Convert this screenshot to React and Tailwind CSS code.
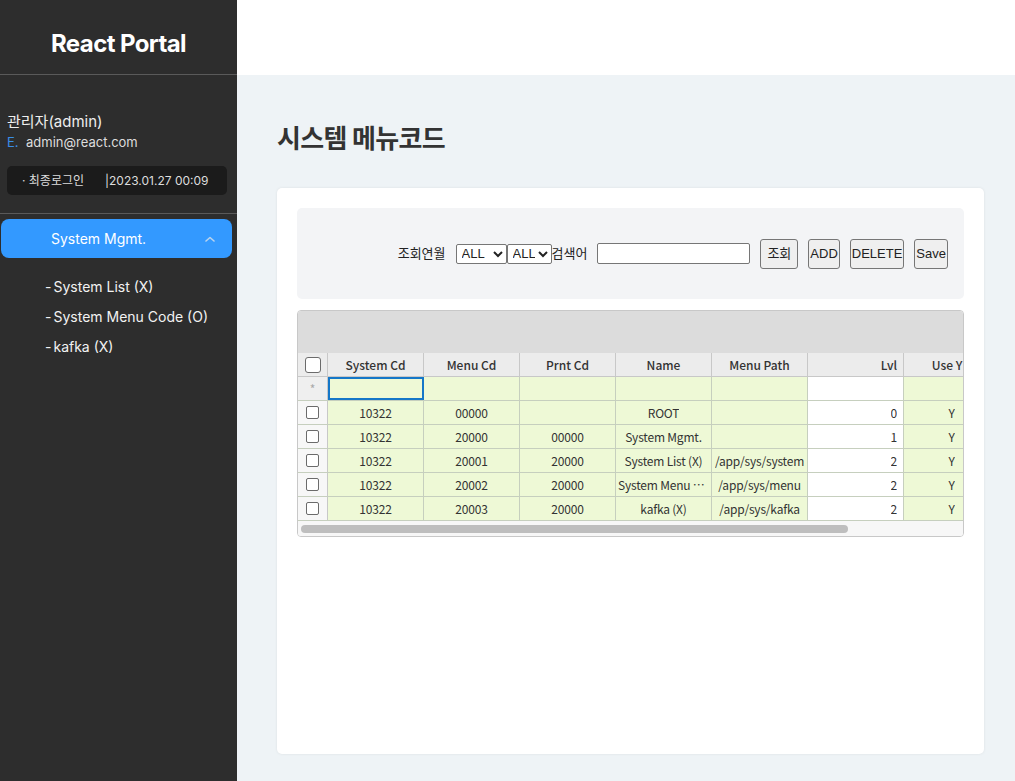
import React from 'react';

const rows = [
  { sys: '10322', menu: '00000', prnt: '', name: 'ROOT', path: '', lvl: '0', use: 'Y' },
  { sys: '10322', menu: '20000', prnt: '00000', name: 'System Mgmt.', path: '', lvl: '1', use: 'Y' },
  { sys: '10322', menu: '20001', prnt: '20000', name: 'System List (X)', path: '/app/sys/system', lvl: '2', use: 'Y' },
  { sys: '10322', menu: '20002', prnt: '20000', name: 'System Menu Code (O)', path: '/app/sys/menu', lvl: '2', use: 'Y' },
  { sys: '10322', menu: '20003', prnt: '20000', name: 'kafka (X)', path: '/app/sys/kafka', lvl: '2', use: 'Y' },
];

const cols = ['System Cd', 'Menu Cd', 'Prnt Cd', 'Name', 'Menu Path', 'Lvl', 'Use YN'];

const Check = ({ big }) => (
  <span className={big ? 'block w-[16px] h-[16px] rounded-[3px] border border-[#6b6b6b] bg-white' : 'block w-[13px] h-[13px] rounded-[2px] border border-[#6b6b6b] bg-white'} />
);

const Cell = ({ children, white, right, selected }) => (
  <div
    className={`w-[96px] shrink-0 h-full border-r border-[#c6cfbe] flex items-center overflow-hidden whitespace-nowrap ${right ? 'justify-end pr-[6px]' : 'justify-center px-[2px]'} ${white ? 'bg-white' : 'bg-[#eef9d6]'} ${selected ? 'outline-2 outline-[#1577c8] -outline-offset-2' : ''}`}
  >
    <span className="truncate tracking-[-0.2px]">{children}</span>
  </div>
);

const Sidebar = () => (
  <aside className="w-[237px] shrink-0 bg-[#2d2d2d] text-white h-[781px]" style={{ fontFamily: 'Inter, "Noto Sans CJK KR", sans-serif' }}>
    <div className="h-[75px] flex items-center justify-center pt-[13px] border-b border-[#5a5a5a]">
      <span className="text-[24px] font-bold tracking-tight">React Portal</span>
    </div>
    <div className="pt-[37px] pl-[7px] pr-[10px]">
      <div className="text-[15px] leading-[20px] text-[#eee]">관리자(admin)</div>
      <div className="text-[13px] leading-[18px] mt-[1px] flex">
        <span className="text-[#3a8ee6] w-[19px]">E.</span>
        <span className="text-[#ddd]">admin@react.com</span>
      </div>
      <div className="mt-[15px] h-[29px] rounded-[5px] bg-[#1b1b1b] flex items-center text-[12px] text-[#ddd]">
        <span className="pl-[15px] w-[98px]">· 최종로그인</span>
        <span>|2023.01.27 00:09</span>
      </div>
    </div>
    <div className="mt-[18px] border-t border-[#5a5a5a]" />
    <div className="pl-[1px] pr-[5px] pt-[5px]">
      <div className="h-[39px] rounded-[8px] bg-[#3399ff] flex items-center justify-between pl-[50px] pr-[17px]">
        <span className="text-[14px]">System Mgmt.</span>
        <svg width="10" height="6" viewBox="0 0 10 6" fill="none">
          <path d="M1 5L5 1.5L9 5" stroke="#b9d3ee" strokeWidth="1.6" strokeLinecap="round" strokeLinejoin="round" />
        </svg>
      </div>
    </div>
    <ul className="pl-[45px] pt-[19px] text-[14px] text-[#f2f2f2] flex flex-col gap-[10px]">
      {['System List (X)', 'System Menu Code (O)', 'kafka (X)'].map((m) => (
        <li key={m} className="leading-[20px]"><span className="mr-[2px]">-</span>{m}</li>
      ))}
    </ul>
  </aside>
);

const SearchBar = () => (
  <div className="h-[91px] rounded-[5px] bg-[#f3f4f6] flex items-center justify-end pr-[16px] text-[13px] text-[#222]" style={{ fontFamily: '"Liberation Sans", "Noto Sans CJK KR", sans-serif' }}>
    <span className="mr-[10px]">조회연월</span>
    <select className="h-[20px] w-[51px] border border-[#767676] rounded-[2px] bg-white text-[13px] pl-[1px]">
      <option>ALL</option>
    </select>
    <select className="h-[20px] w-[45px] border border-[#767676] rounded-[2px] bg-white text-[13px] pl-[1px]">
      <option>ALL</option>
    </select>
    <span className="mr-[10px]">검색어</span>
    <input className="h-[21px] w-[153px] border border-[#767676] rounded-[2px] bg-white mr-[10px]" />
    <button className="h-[30px] px-[6px] border border-[#767676] rounded-[3px] bg-[#efefef] mr-[10px]">조회</button>
    <button className="h-[30px] px-[1px] border border-[#767676] rounded-[3px] bg-[#efefef] mr-[10px]">ADD</button>
    <button className="h-[30px] px-[1px] border border-[#767676] rounded-[3px] bg-[#efefef] mr-[10px]">DELETE</button>
    <button className="h-[30px] px-[1px] border border-[#767676] rounded-[3px] bg-[#efefef]">Save</button>
  </div>
);

const Grid = () => (
  <div className="mt-[11px] w-full min-w-0 border border-[#c8c8c8] rounded-[4px] overflow-hidden text-[12px] text-[#333]" style={{ fontFamily: '"Noto Sans CJK KR", "Noto Sans", sans-serif' }}>
    <div className="h-[42px] bg-[#dcdcdc]" />
    <div className="flex h-[24px] bg-[#ececec] border-b border-[#c8c8c8] font-medium text-[#333]">
      <div className="w-[30px] shrink-0 border-r border-[#c8c8c8] flex items-center justify-center"><Check big /></div>
      {cols.map((c) => (
        <div key={c} className={`w-[96px] shrink-0 border-r border-[#c8c8c8] flex items-center whitespace-nowrap overflow-hidden ${c === 'Lvl' ? 'justify-end pr-[6px]' : 'justify-center'}`}>{c}</div>
      ))}
    </div>
    <div className="flex h-[24px] border-b border-[#c6cfbe]">
      <div className="w-[30px] shrink-0 border-r border-[#c8c8c8] bg-[#efefef] flex items-center justify-center text-[#aaa]">*</div>
      <Cell selected />
      <Cell />
      <Cell />
      <Cell />
      <Cell />
      <Cell white right />
      <Cell />
    </div>
    {rows.map((r) => (
      <div key={r.menu} className="flex h-[24px] border-b border-[#c6cfbe]">
        <div className="w-[30px] shrink-0 border-r border-[#c8c8c8] bg-[#f7f7f7] flex items-center justify-center"><Check /></div>
        <Cell>{r.sys}</Cell>
        <Cell>{r.menu}</Cell>
        <Cell>{r.prnt}</Cell>
        <Cell>{r.name}</Cell>
        <Cell>{r.path}</Cell>
        <Cell white right>{r.lvl}</Cell>
        <Cell>{r.use}</Cell>
      </div>
    ))}
    <div className="h-[15px] bg-[#f7f7f7] flex items-center pl-[3px]">
      <div className="h-[8px] w-[547px] rounded-full bg-[#bebebe]" />
    </div>
  </div>
);

export default function App() {
  return (
    <div className="flex w-[1015px] h-[781px] overflow-hidden">
      <Sidebar />
      <main className="w-[778px] min-w-0 flex flex-col bg-[#eef3f6]">
        <div className="h-[75px] bg-white shrink-0" />
        <div className="pl-[40px]">
          <h1 className="mt-[43px] text-[26px] leading-[38px] font-semibold text-[#333] tracking-tight" style={{ fontFamily: '"Noto Sans CJK KR", sans-serif' }}>시스템 메뉴코드</h1>
          <div className="mt-[32px] w-[707px] h-[566px] bg-white rounded-[5px] shadow-[0_0_3px_rgba(0,0,0,0.08)] p-[20px]">
            <SearchBar />
            <Grid />
          </div>
        </div>
      </main>
    </div>
  );
}
